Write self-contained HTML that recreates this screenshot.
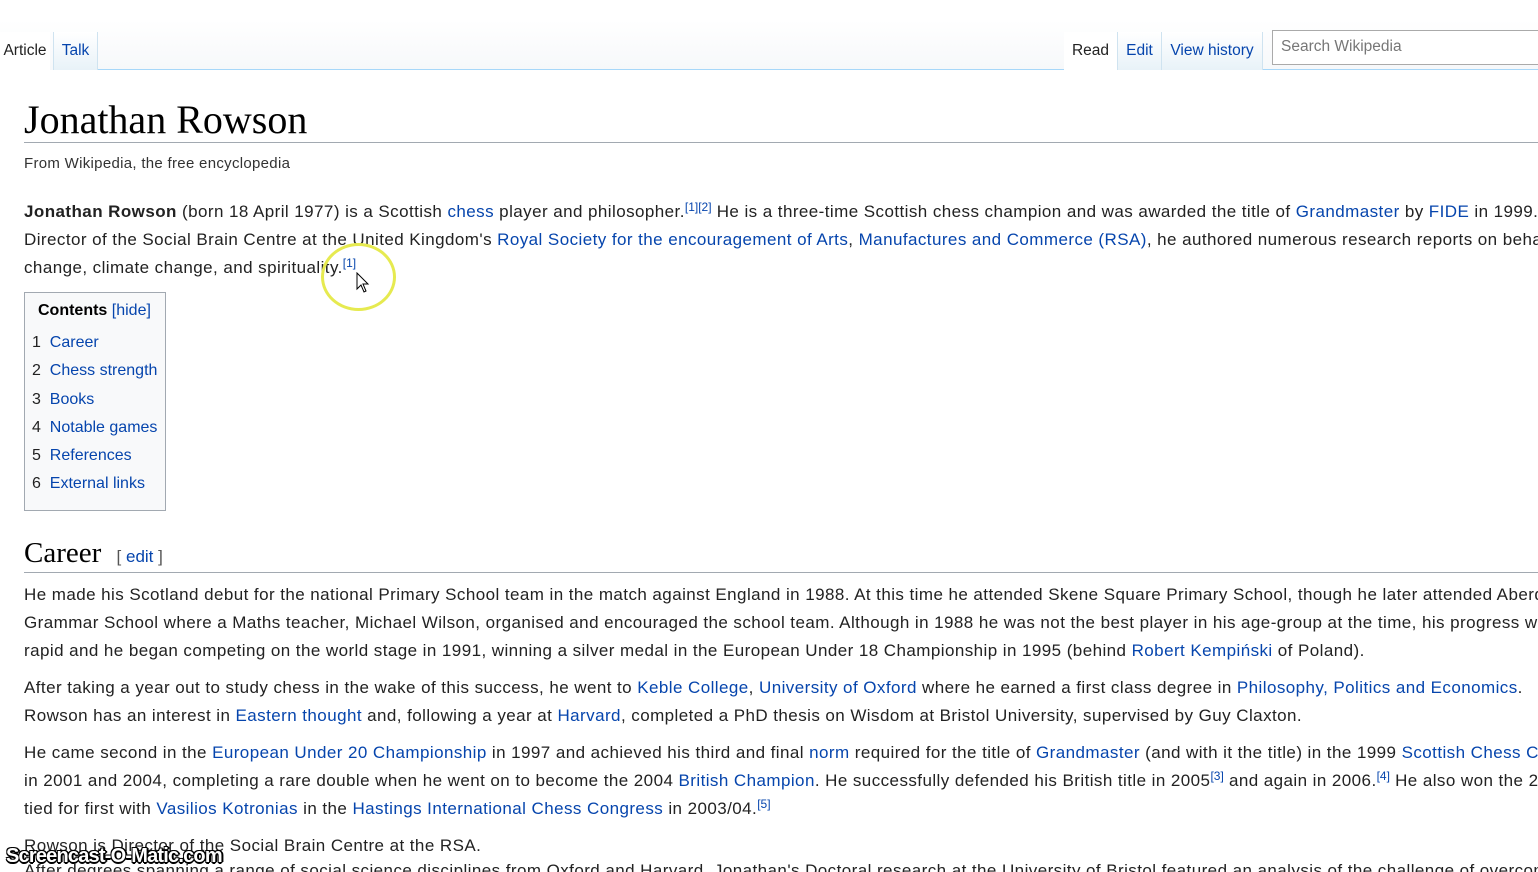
<!DOCTYPE html>
<html><head><meta charset="utf-8"><style>
html,body{margin:0;padding:0;width:1538px;height:872px;overflow:hidden;background:#fff;}
body{font-family:"Liberation Sans",Arial,sans-serif;color:#222;position:relative;}
a{color:#0645ad;text-decoration:none}
.l{position:absolute;left:24px;right:0;overflow:hidden;font-size:17px;letter-spacing:0.43px;white-space:nowrap;line-height:20px;padding-top:6px;margin-top:-6px;}
sup{font-size:12px;letter-spacing:0;vertical-align:0;position:relative;top:-6px;line-height:0}
.topbar{position:absolute;left:0;top:0;width:1538px;height:70px;background:linear-gradient(#fff 20px,#f6f8fa 70px);}
.tabline{position:absolute;left:97px;top:69px;width:967px;height:1px;background:#a7d7f9;}
.tab{position:absolute;top:32px;height:38px;font-size:15.5px;line-height:38px;}
.sel{background:#fff}
.blue{background:linear-gradient(#fff,#e8f2f8);border-right:1px solid #cfe3f0;border-left:1px solid #cfe3f0}
</style></head><body>
<div class="topbar"></div>
<div class="tabline"></div>
<div style="position:absolute;left:1064px;top:69px;width:474px;height:1px;background:#a7d7f9"></div>
<div class="tab sel" style="left:0;width:50px;text-align:center;color:#222">Article</div>
<div class="tab blue" style="left:53px;width:43px;text-align:center"><a>Talk</a></div>
<div class="tab sel" style="left:1064px;width:53px;text-align:center;color:#222;height:40px">Read</div>
<div class="tab blue" style="left:1117px;width:43px;text-align:center"><a>Edit</a></div>
<div class="tab blue" style="left:1161px;width:100px;text-align:center"><a>View history</a></div>
<div style="position:absolute;left:1272px;top:30px;width:266px;height:35px;border:1px solid #aaa;border-right:none;background:#fff;box-sizing:border-box;font-size:15.5px;color:#777;padding:7px 0 0 8px">Search Wikipedia</div>

<div style="position:absolute;left:24px;top:96px;font-family:'Liberation Serif',serif;font-size:40px;color:#000;white-space:nowrap">Jonathan Rowson</div>
<div style="position:absolute;left:24px;top:142px;width:1514px;height:1px;background:#a2a9b1"></div>
<div style="position:absolute;left:24px;top:155px;font-size:15px;letter-spacing:0.3px;color:#333;white-space:nowrap">From Wikipedia, the free encyclopedia</div>

<div class="l" style="top:202px"><b>Jonathan Rowson</b> (born 18 April 1977) is a Scottish <a>chess</a> player and philosopher.<sup><a>[1][2]</a></sup> He is a three-time Scottish chess champion and was awarded the title of <a>Grandmaster</a> by <a>FIDE</a> in 1999.</div>
<div class="l" style="top:230px">Director of the Social Brain Centre at the United Kingdom's <a>Royal Society for the encouragement of Arts</a>, <a>Manufactures and Commerce (RSA)</a>, he authored numerous research reports on behaviour</div>
<div class="l" style="top:258px">change, climate change, and spirituality.<sup><a>[1]</a></sup></div>

<div style="position:absolute;left:321px;top:243px;width:75px;height:68px;border:3px solid #e6ea50;border-radius:50%;box-sizing:border-box;"></div>
<svg style="position:absolute;left:356px;top:272px" width="14" height="22" viewBox="0 0 14 22"><path d="M1 1 L1 17 L5 13 L8 20 L10 19 L7 12 L12 12 Z" fill="#fff" stroke="#000" stroke-width="1"/></svg>

<div style="position:absolute;left:24px;top:292px;width:142px;height:219px;border:1px solid #a2a9b1;background:#f8f9fa;box-sizing:border-box;font-size:16px;">
<div style="position:absolute;left:13px;top:9px;white-space:nowrap"><b style="color:#000">Contents</b> <a>[hide]</a></div>
<div style="position:absolute;left:7px;top:36px;line-height:28.3px;white-space:nowrap">
1&nbsp; <a>Career</a><br>2&nbsp; <a>Chess strength</a><br>3&nbsp; <a>Books</a><br>4&nbsp; <a>Notable games</a><br>5&nbsp; <a>References</a><br>6&nbsp; <a>External links</a></div></div>

<div style="position:absolute;left:24px;top:537px;font-family:'Liberation Serif',serif;font-size:29px;color:#000;white-space:nowrap">Career <span style="font-family:'Liberation Sans',sans-serif;font-size:17px;color:#555;margin-left:8px">[ <a>edit</a> ]</span></div>
<div style="position:absolute;left:24px;top:572px;width:1514px;height:1px;background:#a2a9b1"></div>

<div class="l" style="top:585px">He made his Scotland debut for the national Primary School team in the match against England in 1988. At this time he attended Skene Square Primary School, though he later attended Aberdeen</div>
<div class="l" style="top:613px">Grammar School where a Maths teacher, Michael Wilson, organised and encouraged the school team. Although in 1988 he was not the best player in his age-group at the time, his progress was</div>
<div class="l" style="top:641px">rapid and he began competing on the world stage in 1991, winning a silver medal in the European Under 18 Championship in 1995 (behind <a>Robert Kempiński</a> of Poland).</div>
<div class="l" style="top:678px">After taking a year out to study chess in the wake of this success, he went to <a>Keble College</a>, <a>University of Oxford</a> where he earned a first class degree in <a>Philosophy, Politics and Economics</a>.</div>
<div class="l" style="top:706px">Rowson has an interest in <a>Eastern thought</a> and, following a year at <a>Harvard</a>, completed a PhD thesis on Wisdom at Bristol University, supervised by Guy Claxton.</div>
<div class="l" style="top:743px">He came second in the <a>European Under 20 Championship</a> in 1997 and achieved his third and final <a>norm</a> required for the title of <a>Grandmaster</a> (and with it the title) in the 1999 <a>Scottish Chess Championship</a></div>
<div class="l" style="top:771px">in 2001 and 2004, completing a rare double when he went on to become the 2004 <a>British Champion</a>. He successfully defended his British title in 2005<sup><a>[3]</a></sup> and again in 2006.<sup><a>[4]</a></sup> He also won the 2</div>
<div class="l" style="top:799px">tied for first with <a>Vasilios Kotronias</a> in the <a>Hastings International Chess Congress</a> in 2003/04.<sup><a>[5]</a></sup></div>
<div class="l" style="top:836px">Rowson is Director of the Social Brain Centre at the RSA.</div>
<div class="l" style="top:861px">After degrees spanning a range of social science disciplines from Oxford and Harvard, Jonathan's Doctoral research at the University of Bristol featured an analysis of the challenge of overcoming</div>
<div style="position:absolute;left:6px;top:845px;font-size:20px;font-weight:bold;color:#fff;letter-spacing:-0.8px;white-space:nowrap;text-shadow:-1px -1px 0 #000,1px -1px 0 #000,-1px 1px 0 #000,1px 1px 0 #000,0 2px 0 #000,2px 0 0 #000">Screencast-O-Matic.com</div>
</body></html>
